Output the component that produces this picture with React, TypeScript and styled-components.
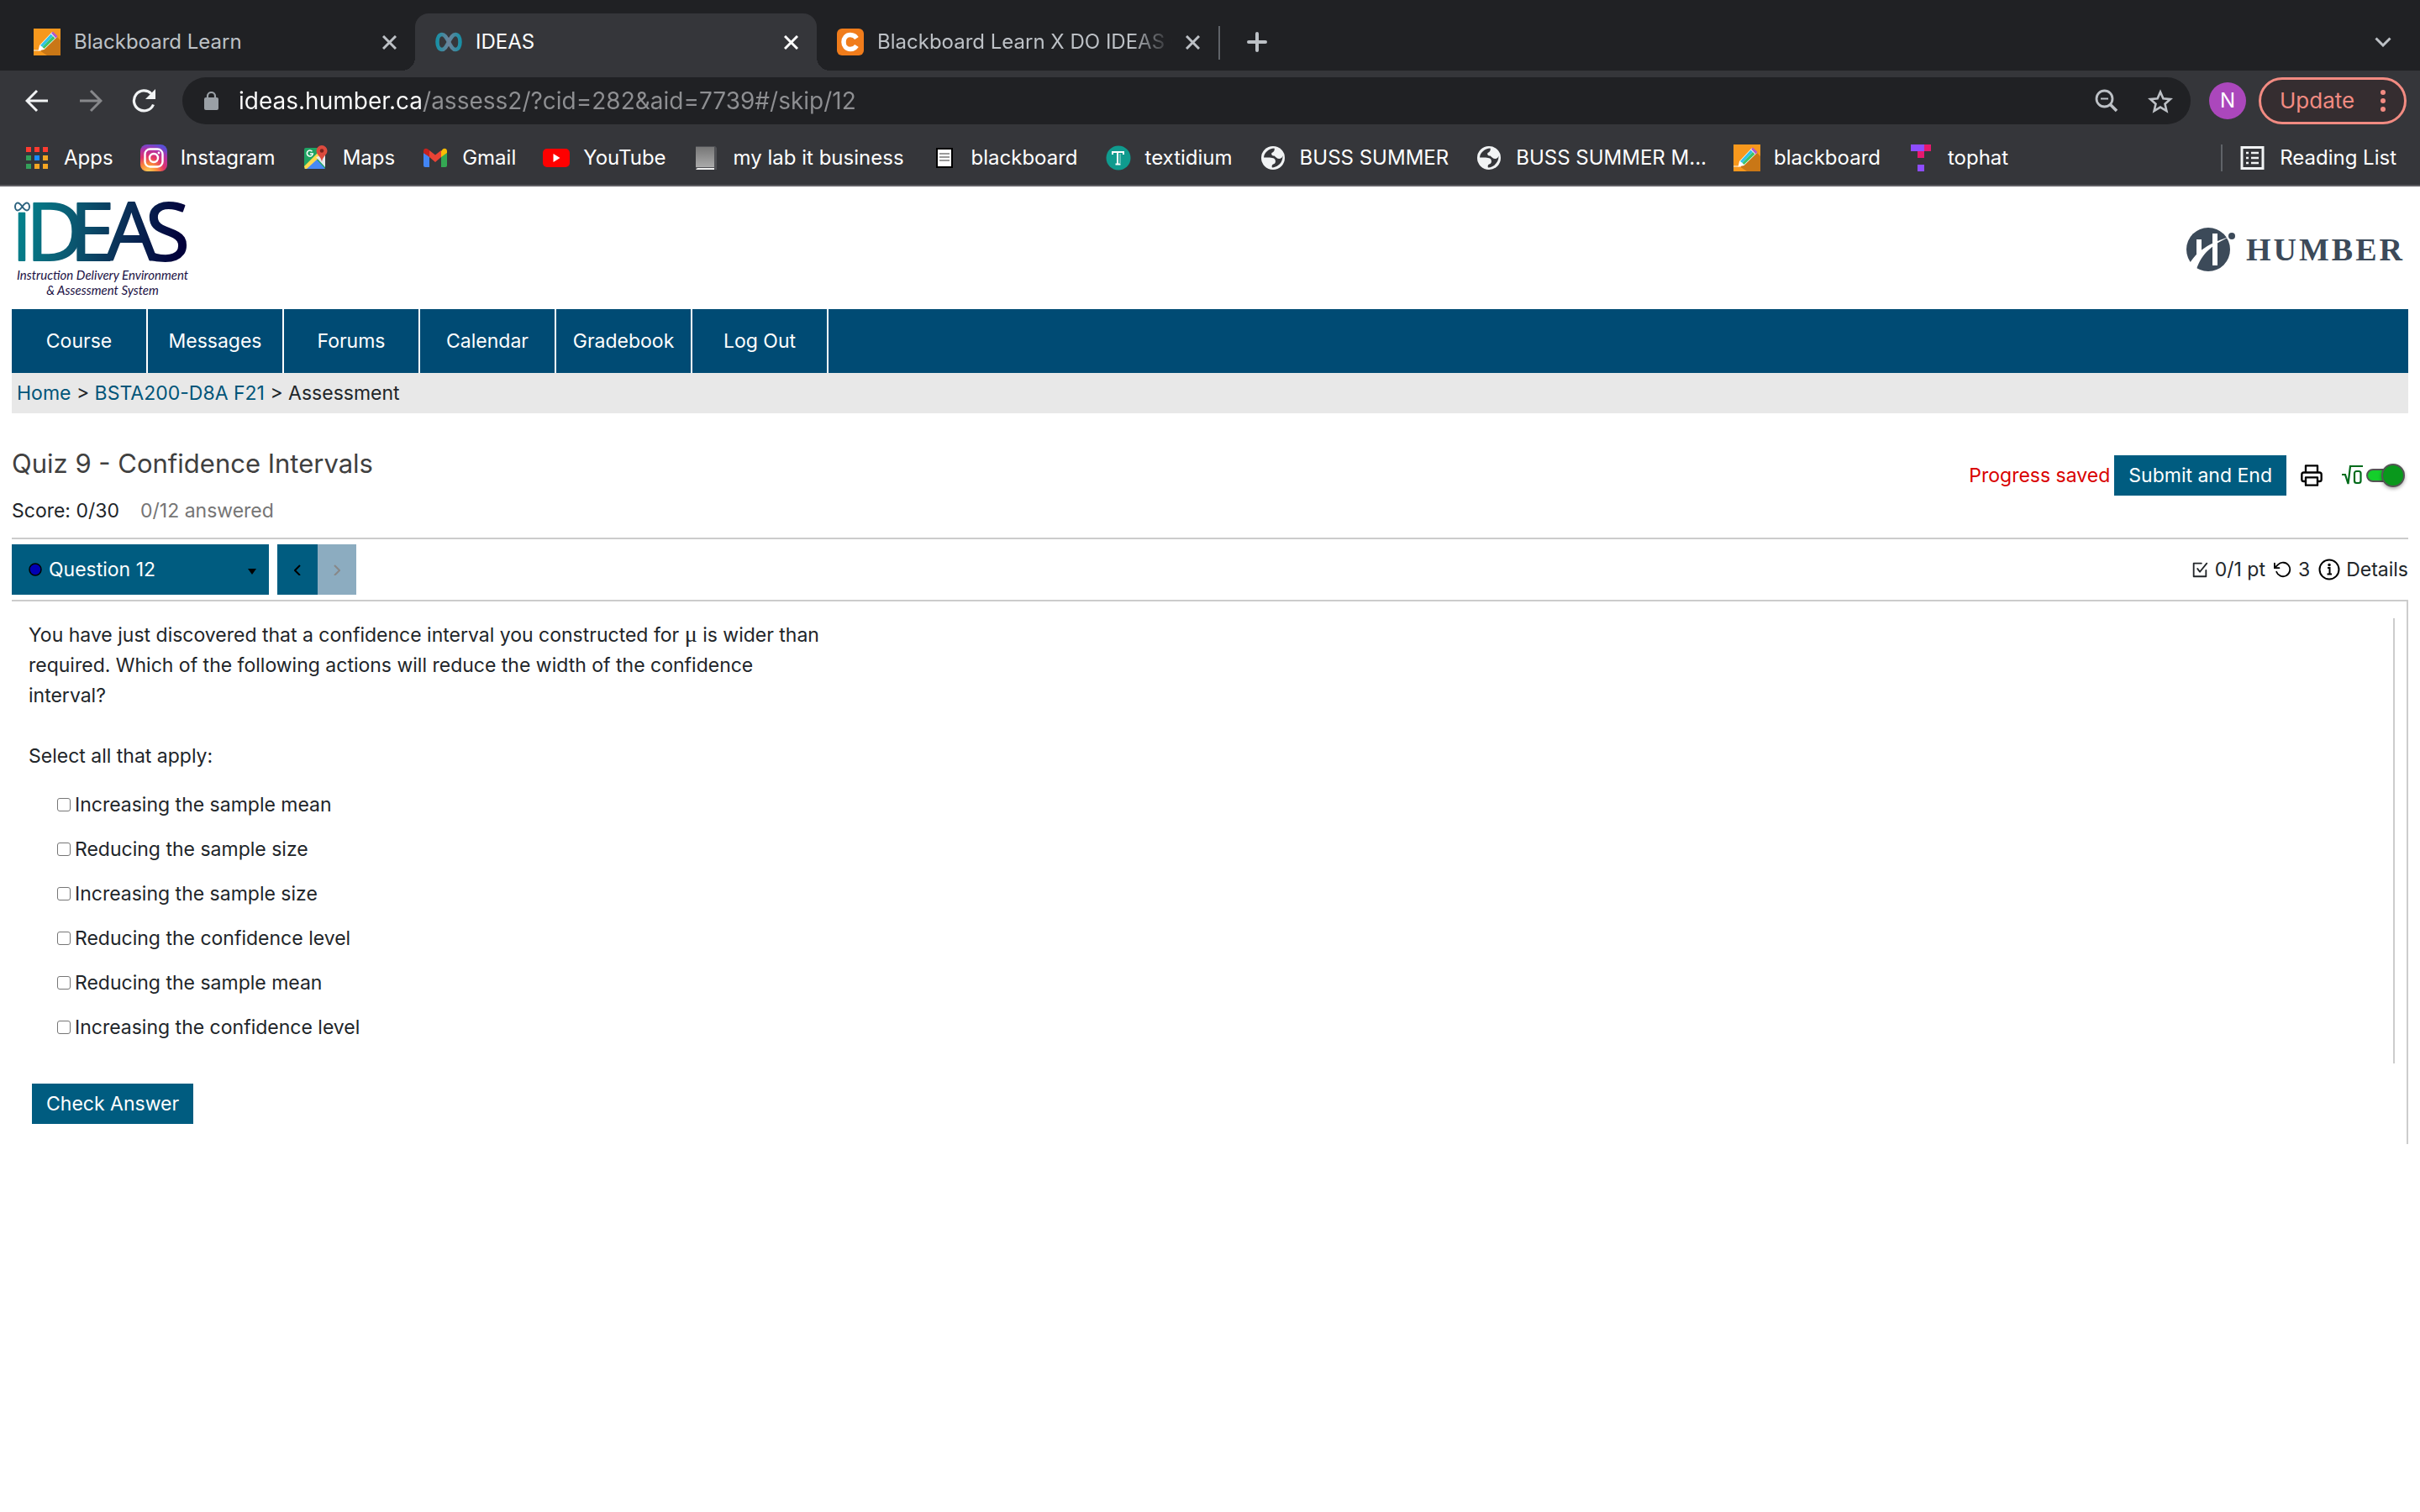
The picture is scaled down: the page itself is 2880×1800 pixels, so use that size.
import React from "react";
import styled, { createGlobalStyle } from "styled-components";

const GlobalStyle = createGlobalStyle`
  *, *::before, *::after { box-sizing: border-box; }
  body {
    margin: 0;
    background: #fff;
    color: #212529;
    font-family: Inter, "Liberation Sans", sans-serif;
    font-size: 23px;
    line-height: 36px;
  }
  button, input, select { font: inherit; color: inherit; }
  button { border: 0; padding: 0; background: none; cursor: pointer; }
  a { color: inherit; text-decoration: none; }
  svg { display: block; flex: none; }
  h1, p, ul { margin: 0; padding: 0; }
`;

/* ---------- Browser chrome ---------- */

const Chrome = styled.header`
  background: #35363a;
  color: #fff;
  font-size: 24px;
  border-bottom: 2px solid #5f5e63;
`;

const TabStrip = styled.div`
  display: flex;
  align-items: flex-end;
  height: 84px;
  padding: 0 34px 0 16px;
  background: #202124;
`;

const Tab = styled.div<{ $active?: boolean }>`
  position: relative;
  display: flex;
  align-items: center;
  gap: 16px;
  flex: 0 1 478px;
  min-width: 0;
  height: 68px;
  padding: 0 22px 0 24px;
  border-radius: 16px 16px 0 0;
  background: ${(p) => (p.$active ? "#35363a" : "transparent")};
  color: ${(p) => (p.$active ? "#fff" : "#bdc1c6")};

  &::before,
  &::after {
    content: ${(p) => (p.$active ? '""' : "none")};
    position: absolute;
    bottom: 0;
    width: 16px;
    height: 16px;
  }
  &::before {
    left: -16px;
    background: radial-gradient(circle at 0 0, transparent 16px, #35363a 16px);
  }
  &::after {
    right: -16px;
    background: radial-gradient(circle at 100% 0, transparent 16px, #35363a 16px);
  }
`;

const TabTitle = styled.span<{ $fade?: boolean }>`
  flex: 1;
  min-width: 0;
  overflow: hidden;
  white-space: nowrap;
  mask-image: ${(p) => (p.$fade ? "linear-gradient(90deg, #000 86%, transparent)" : "none")};
`;

const StripDivider = styled.span`
  width: 2px;
  height: 40px;
  margin-bottom: 13px;
  background: #5f6368;
`;

const StripButton = styled.button<{ $end?: boolean }>`
  display: grid;
  place-items: center;
  height: 68px;
  margin-left: ${(p) => (p.$end ? "auto" : "32px")};
  color: #bdc1c6;
`;

const Toolbar = styled.div`
  display: flex;
  align-items: center;
  height: 72px;
  padding: 0 16px 0 28px;
`;

const NavButton = styled.button<{ $dim?: boolean }>`
  display: grid;
  place-items: center;
  width: 32px;
  height: 48px;
  margin-right: 32px;
  color: ${(p) => (p.$dim ? "#87888b" : "#f1f3f4")};
`;

const AddressBar = styled.div`
  display: flex;
  align-items: center;
  flex: 1;
  height: 56px;
  margin: 0 22px 0 -3px;
  padding: 0 20px 0 26px;
  border-radius: 28px;
  background: #202124;
`;

const AddressInput = styled.input`
  flex: 1;
  min-width: 0;
  height: 40px;
  margin-left: 24px;
  padding: 0;
  border: 0;
  outline: 0;
  font-size: 28px;
  color: #fff;
  background: linear-gradient(90deg, #fff 220px, #8e8f92 220px);
  background-clip: text;
  -webkit-background-clip: text;
  -webkit-text-fill-color: transparent;
`;

const AddressAction = styled.button`
  display: grid;
  place-items: center;
  width: 32px;
  height: 40px;
  margin-left: 32px;
  color: #bdc1c6;
`;

const Avatar = styled.button`
  width: 44px;
  height: 44px;
  margin-right: 15px;
  border-radius: 50%;
  background: #ab47bc;
  text-align: center;
`;

const UpdateButton = styled.button`
  display: flex;
  align-items: center;
  justify-content: space-between;
  width: 176px;
  height: 56px;
  padding: 0 22px;
  border: 3px solid #f28b82;
  border-radius: 28px;
  background: #352d30;
  color: #f28b82;
  font-size: 26px;
`;

const BookmarkBar = styled.nav`
  display: flex;
  align-items: center;
  gap: 32px;
  height: 64px;
  padding: 0 28px;
`;

const Bookmark = styled.a`
  display: flex;
  align-items: center;
  gap: 16px;
  white-space: nowrap;
`;

const ReadingList = styled.button`
  display: flex;
  align-items: center;
  gap: 18px;
  height: 32px;
  margin-left: auto;
  padding-left: 20px;
  border-left: 2px solid #5f6368;
`;

/* ---------- Course page ---------- */

const Page = styled.main`
  padding: 0 14px;
`;

const Masthead = styled.div`
  display: flex;
  align-items: center;
  justify-content: space-between;
  height: 146px;

  svg { overflow: visible; }
`;

const MenuBar = styled.nav`
  display: flex;
  height: 76px;
  background: #004b74;
  color: #fff;
`;

const MenuItem = styled.a`
  display: grid;
  place-items: center;
  width: 162px;
  border-right: 2px solid #fff;
`;

const Breadcrumb = styled.nav`
  padding: 6px;
  background: #e8e8e8;
`;

const CrumbLink = styled.a`
  color: #005579;
`;

const QuizHeader = styled.section`
  display: flex;
  align-items: center;
  justify-content: space-between;
  border-bottom: 2px solid #ccc;
`;

const QuizSummary = styled.div`
  padding: 40px 0 14px;
`;

const QuizTitle = styled.h1`
  margin-bottom: 18px;
  font-size: 31px;
  line-height: 40px;
  font-weight: 400;
  color: #404040;
`;

const ScoreLine = styled.p`
  display: flex;
  gap: 25px;
`;

const Answered = styled.span`
  color: #757575;
`;

const QuizActions = styled.div`
  display: flex;
  align-items: center;
`;

const SavedNote = styled.span`
  margin-right: 5px;
  color: #d90000;
`;

const PrimaryButton = styled.button`
  height: 48px;
  padding: 0 17px;
  background: #005c80;
  color: #fff;
`;

const PrintButton = styled.button`
  margin: 0 22px 0 16px;
  color: #000;
`;

const MathToggle = styled.label`
  display: flex;
  align-items: center;
  gap: 4px;
  padding-right: 4px;
`;

const Switch = styled.input`
  appearance: none;
  display: flex;
  align-items: center;
  width: 46px;
  height: 28px;
  margin: 0;

  &::before {
    content: "";
    width: 32px;
    height: 16px;
    border: 2px solid #555;
    border-radius: 8px;
    background: #14cf2b;
  }
  &::after {
    content: "";
    flex: none;
    width: 28px;
    height: 28px;
    margin-left: -14px;
    border: 2px solid #555;
    border-radius: 50%;
    background: #09981c;
    box-shadow: 0 2px 4px #0005;
  }
`;

const QuestionBar = styled.section`
  display: flex;
  align-items: center;
  justify-content: space-between;
  padding: 6px 0;
  border-bottom: 2px solid #ccc;
`;

const QuestionNav = styled.div`
  display: flex;
  height: 60px;
`;

const QuestionPicker = styled.label`
  display: flex;
  align-items: center;
  width: 306px;
  margin-right: 10px;
  padding: 0 15px 0 20px;
  background: #005c80;
  color: #fff;
`;

const QuestionSelect = styled.select`
  appearance: none;
  flex: 1;
  min-width: 0;
  height: 60px;
  padding: 0 0 0 8px;
  border: 0;
  background: transparent;
`;

const StepButton = styled.button`
  display: grid;
  place-items: center;
  width: 48px;
  background: #005c80;
  color: #000;

  &:disabled {
    width: 46px;
    background: #8cacc0;
    color: #888;
  }
`;

const QuestionInfo = styled.div`
  display: flex;
  align-items: center;
  color: #212529;
`;

const InfoItem = styled.span`
  display: flex;
  align-items: center;
  gap: 7px;
  margin-right: 10px;
`;

const DetailsButton = styled.button`
  display: flex;
  align-items: center;
  gap: 7px;
`;

const QuestionPanel = styled.section`
  padding: 20px 14px 24px 0;
  border-right: 2px solid #ccc;
`;

const QuestionBody = styled.div`
  padding: 2px 20px 17px;
  border-right: 2px solid #ccc;
`;

const Prompt = styled.p`
  max-width: 950px;
  margin-bottom: 36px;
`;

const Mu = styled.span`
  font-family: "Liberation Serif", serif;
  font-size: 28px;
  line-height: 1;
`;

const Options = styled.ul`
  margin: 13px 0 0 34px;
  list-style: none;
`;

const Option = styled.li`
  display: flex;
  align-items: center;
  gap: 5px;
  height: 53px;
`;

const Checkbox = styled.input`
  appearance: none;
  width: 16px;
  height: 16px;
  margin: 0;
  border: 1px solid #767676;
  border-radius: 3px;
  background: #fff;

  &:checked { background: #005c80; }
`;

const CheckRow = styled.div`
  padding: 24px 0 0 24px;
`;

/* ---------- Icons ---------- */

const line = {
  fill: "none",
  stroke: "currentColor",
  strokeWidth: 2,
  strokeLinecap: "round" as const,
  strokeLinejoin: "round" as const,
};

const CloseIcon = () => (
  <svg width="17" height="17" viewBox="0 0 17 17" fill="none" stroke="currentColor" strokeWidth="3">
    <path d="M1 1l15 15M16 1L1 16" />
  </svg>
);

const PencilFavicon = () => (
  <svg width="32" height="32" viewBox="0 0 32 32">
    <rect width="32" height="32" fill="#f7981d" />
    <path d="M27 9L32 14V32H16L7 26z" fill="#c97716" />
    <path d="M0 26h9" stroke="#fbd7a5" strokeWidth="1.5" />
    <path d="M5.500 26.500l1.500-6.500L22 4l6 6L12.500 25z" fill="#fff" />
    <path d="M8 20L20.500 6.500l2.500 2.500-12.500 13z" fill="#2fc3e8" />
    <path d="M10.500 22L23 9l2.500 2.500L12.500 24z" fill="#3bc46a" />
    <path d="M21 5.500l2-2 5.500 5.500-2 2.500z" fill="#b05acb" />
  </svg>
);

const InfinityFavicon = () => (
  <svg width="32" height="32" viewBox="0 0 32 32" fill="none" strokeWidth="4.5">
    <defs>
      <linearGradient id="inf">
        <stop offset="0" stopColor="#1a8fa5" />
        <stop offset=".5" stopColor="#6d8299" />
        <stop offset="1" stopColor="#1a8fa5" />
      </linearGradient>
    </defs>
    <path
      stroke="url(#inf)"
      d="M16 16C13 10 11 7 8 7 4.500 7 2.500 11 2.500 16S4.500 25 8 25c3 0 5-3 8-9s5-9 8-9c3.500 0 5.500 4 5.500 9S27.500 25 24 25c-3 0-5-3-8-9z"
    />
  </svg>
);

const CheggFavicon = () => (
  <svg width="32" height="32" viewBox="0 0 32 32">
    <rect width="32" height="32" rx="6" fill="#f07c1b" />
    <path
      d="M23.500 11.500C21.500 8.500 19 7.500 16 7.500c-5 0-8 3.800-8 8.500s3 8.500 8 8.500c3 0 5.500-1 7.500-4"
      fill="none"
      stroke="#fff"
      strokeWidth="5.500"
    />
  </svg>
);

const PlusIcon = () => (
  <svg width="24" height="24" viewBox="0 0 24 24" stroke="currentColor" strokeWidth="4" strokeLinecap="round">
    <path d="M12 2v20M2 12h20" />
  </svg>
);

const ChevronDown = () => (
  <svg width="20" height="12" viewBox="0 0 20 12" fill="none" stroke="currentColor" strokeWidth="3">
    <path d="M1.500 1.500l8.500 8.500 8.500-8.500" />
  </svg>
);

const ArrowIcon = ({ flip }: { flip?: boolean }) => (
  <svg width="28" height="28" viewBox="0 0 28 28" fill="none" stroke="currentColor" strokeWidth="3">
    {flip ? <path d="M1 14h24M14 2l12 12-12 12" /> : <path d="M27 14H3M14 2L2 14l12 12" />}
  </svg>
);

const ReloadIcon = () => (
  <svg width="30" height="28" viewBox="0 0 30 28">
    <path d="M25.500 18.500A12 12 0 1 1 23 5.500" fill="none" stroke="currentColor" strokeWidth="3.200" />
    <path d="M28 0v12H16z" fill="currentColor" />
  </svg>
);

const LockIcon = () => (
  <svg width="17" height="22" viewBox="0 0 17 22">
    <rect y="7" width="17" height="15" rx="2" fill="#9aa0a6" />
    <path d="M4 8V5.500a4.500 4.500 0 0 1 9 0V8" fill="none" stroke="#9aa0a6" strokeWidth="2.200" />
  </svg>
);

const ZoomIcon = () => (
  <svg width="28" height="28" viewBox="0 0 28 28" fill="none" stroke="currentColor">
    <circle cx="11.500" cy="11.500" r="9.500" strokeWidth="2.800" />
    <path d="M18.500 18.500L26 26" strokeWidth="3.600" />
    <path d="M7 11.500h9" strokeWidth="2" />
  </svg>
);

const StarIcon = () => (
  <svg width="30" height="29" viewBox="0 0 30 29" fill="none" stroke="currentColor" strokeWidth="2.600">
    <path d="M15 3.500l3.400 7.800 8.500.8-6.400 5.600 1.900 8.300L15 21.600 7.600 26l1.900-8.300-6.400-5.600 8.500-.8z" />
  </svg>
);

const DotsIcon = () => (
  <svg width="6" height="28" viewBox="0 0 6 28" fill="currentColor">
    <circle cx="3" cy="4" r="3" />
    <circle cx="3" cy="14" r="3" />
    <circle cx="3" cy="24" r="3" />
  </svg>
);

const gridColours = ["#ff3b30", "#ff3b30", "#ff3b30", "#34a05a", "#1a8cff", "#f5a623", "#34a05a", "#f5a623", "#f5a623"];

const AppsIcon = () => (
  <svg width="32" height="32" viewBox="0 0 32 32">
    {gridColours.map((c, i) => (
      <rect key={i} x={3 + (i % 3) * 10} y={3 + Math.floor(i / 3) * 10} width="6" height="6" fill={c} />
    ))}
  </svg>
);

const InstagramIcon = () => (
  <svg width="32" height="32" viewBox="0 0 32 32">
    <defs>
      <radialGradient id="ig" cx=".3" cy="1.050" r="1.100">
        <stop offset="0" stopColor="#fed45a" />
        <stop offset=".3" stopColor="#fb8a3a" />
        <stop offset=".55" stopColor="#e0336b" />
        <stop offset=".8" stopColor="#b032a8" />
        <stop offset="1" stopColor="#5a50d8" />
      </radialGradient>
    </defs>
    <rect width="32" height="32" rx="8" fill="url(#ig)" />
    <g fill="none" stroke="#fff" strokeWidth="2.400">
      <rect x="5.500" y="5.500" width="21" height="21" rx="6" />
      <circle cx="16" cy="16" r="5" />
    </g>
    <circle cx="22" cy="10" r="1.400" fill="#fff" />
  </svg>
);

const MapsIcon = () => (
  <svg width="32" height="32" viewBox="0 0 32 32">
    <rect x="2" y="4" width="25" height="25" rx="2" fill="#1fa363" />
    <path d="M2 29L15 16l12 13z" fill="#4889f4" />
    <path d="M2 26L24 4l4 4L5 29H3z" fill="#ffd94f" />
    <path d="M16 15L27 27V12z" fill="#e8eaed" />
    <path d="M11.500 8.300a3.500 3.500 0 1 0 .8 2.700H9" fill="none" stroke="#fff" strokeWidth="1.500" />
    <path d="M23 1a6.500 6.500 0 0 0-6.500 6.500c0 5 5.300 6 6.500 13 1.200-7 6.500-8 6.500-13A6.500 6.500 0 0 0 23 1z" fill="#dd4b3e" />
    <circle cx="23" cy="7.500" r="2.300" fill="#7b231d" />
  </svg>
);

const GmailIcon = () => (
  <svg width="32" height="32" viewBox="0 0 32 32">
    <path d="M2 10v15a2 2 0 0 0 2 2h5V14z" fill="#4285f4" />
    <path d="M30 10v15a2 2 0 0 1-2 2h-5V14z" fill="#34a853" />
    <path d="M23 8v7l7-5V8c0-3-3-4-5-2.500z" fill="#fbbc04" />
    <path d="M9 15V7l7 5.500L23 7v8l-7 6z" fill="#ea4335" />
    <path d="M2 8v2l7 5V7L7 5.500C5 4 2 5 2 8z" fill="#c5221f" />
  </svg>
);

const YouTubeIcon = () => (
  <svg width="32" height="32" viewBox="0 0 32 32">
    <rect y="5" width="32" height="22" rx="5" fill="#f00" />
    <path d="M12.500 11l8 5-8 5z" fill="#fff" />
  </svg>
);

const LabIcon = () => (
  <svg width="32" height="32" viewBox="0 0 32 32">
    <defs>
      <linearGradient id="lab" x2="0" y2="1">
        <stop offset="0" stopColor="#777" />
        <stop offset="1" stopColor="#aaa" />
      </linearGradient>
    </defs>
    <path d="M3 2h23l2 2v26H3z" fill="#505155" />
    <rect x="3" y="3" width="22" height="24" fill="url(#lab)" />
    <path d="M3 30l2-2h20v2z" fill="#eee" />
  </svg>
);

const DocIcon = () => (
  <svg width="32" height="32" viewBox="0 0 32 32">
    <rect x="6" y="4" width="20" height="24" fill="#000" />
    <rect x="8" y="6" width="16" height="20" fill="#fff" />
    <path d="M10 11h12M10 15h12M10 19h12" stroke="#999" strokeWidth="2" />
  </svg>
);

const TextidiumIcon = () => (
  <svg width="32" height="32" viewBox="0 0 32 32">
    <circle cx="16" cy="16" r="14.500" fill="#0f9b8e" />
    <path d="M9 12V9h13v3M15 9v14M12.500 23.500h6" fill="none" stroke="#fff" strokeWidth="2" />
    <path d="M18 11v11" stroke="#8fd6cf" strokeWidth="1.200" />
  </svg>
);

const GlobeIcon = () => (
  <svg width="32" height="32" viewBox="0 0 32 32">
    <circle cx="16" cy="16" r="14" fill="#f1f3f4" />
    <path
      d="M5 15.500C5.500 9.500 11 5 17.500 4.500c1 2-.5 4.500-3 5.500-1 2 .5 3.500 3 3.500 2 1.500 3 3.500 6 3.500 2 0 3.500-1.500 4-3.500C28 21 22 27 15 27.500c-1-2 0-4 2.500-4.500 2-1.500 2-5-.5-6.500-2-1-7-1-12-1z"
      fill="#35363a"
    />
  </svg>
);

const TopHatIcon = () => (
  <svg width="32" height="32" viewBox="0 0 32 32">
    <rect x="4" width="16" height="8" fill="#8e4dff" />
    <rect x="20" width="8" height="8" fill="#e6196e" />
    <rect x="12" y="8" width="8" height="8" fill="#e6196e" />
    <rect x="12" y="24" width="8" height="8" fill="#8e4dff" />
  </svg>
);

const ListIcon = () => (
  <svg width="30" height="28" viewBox="0 0 30 28" stroke="#f1f3f4" fill="none">
    <rect x="3" y="1.500" width="25" height="25" strokeWidth="3" />
    <path d="M8 8h3M8 14h3M8 20h3M14 8h9M14 14h9M14 20h9" strokeWidth="2.400" />
  </svg>
);

const IdeasLogo = () => (
  <svg width="220" height="136" viewBox="0 0 220 136" role="img" aria-label="IDEAS">
    <defs>
      <linearGradient id="ideas" gradientUnits="userSpaceOnUse" x1="8" y1="0" x2="208" y2="40">
        <stop offset="0" stopColor="#04868f" />
        <stop offset=".3" stopColor="#0a6076" />
        <stop offset=".65" stopColor="#0a2f57" />
        <stop offset="1" stopColor="#02003a" />
      </linearGradient>
    </defs>
    <path
      d="M12.500 19C10 15.500 8.500 14.500 7 14.500S4 16.500 4 19s1.500 4.500 3 4.500 3-1 5.500-4.500S16.500 14.500 18 14.500s3 2 3 4.500-1.500 4.500-3 4.500-3-1-5.500-4.500z"
      fill="none"
      stroke="#2e6480"
      strokeWidth="2"
    />
    <g fill="url(#ideas)" stroke="url(#ideas)" strokeLinejoin="round" fontFamily="'Open Sans', sans-serif">
      <text y="83" fontSize="96" strokeWidth="2">
        <tspan x="1" fontSize="79">I</tspan>
        <tspan x="17">D</tspan>
        <tspan x="69">E</tspan>
        <tspan x="112">A</tspan>
        <tspan x="159">S</tspan>
      </text>
    </g>
    <g fill="#1b1145" fontFamily="Lato, sans-serif" fontStyle="italic" fontSize="15" textAnchor="middle">
      <text x="108" y="106">Instruction Delivery Environment</text>
      <text x="108" y="124">&amp; Assessment System</text>
    </g>
  </svg>
);

const HumberLogo = () => (
  <svg width="266" height="60" viewBox="0 2 266 60" role="img" aria-label="Humber">
    <g fill="#3c4a59">
      <circle cx="28" cy="34" r="26" />
      <circle cx="56" cy="18" r="4" />
    </g>
    <path d="M14 22h6v16l-6 6z" fill="#fff" />
    <path d="M33 15h6v38h-6z" fill="#fff" />
    <path d="M4 54C12 39 24 28 53 19 34 28 20 38 14 58z" fill="#fff" />
    <text x="73" y="47" fontFamily="'Liberation Serif', serif" fontWeight="700" fontSize="38" letterSpacing="3" fill="#3c4a59">
      HUMBER
    </text>
  </svg>
);

const PrinterIcon = () => (
  <svg width="28" height="28" viewBox="0 0 24 24" {...line}>
    <path d="M6 9V2h12v7M6 18H4a2 2 0 0 1-2-2v-5a2 2 0 0 1 2-2h16a2 2 0 0 1 2 2v5a2 2 0 0 1-2 2h-2" />
    <path d="M6 14h12v8H6z" />
  </svg>
);

const RootIcon = () => (
  <svg width="25" height="26" viewBox="0 0 25 26" fill="none" stroke="#006b1a" strokeWidth="2.200">
    <path d="M0 12h4l3.500 11L10 2h15" />
    <rect x="15" y="8" width="7.500" height="14" rx="2.500" />
  </svg>
);

const CheckSquareIcon = () => (
  <svg width="22" height="22" viewBox="0 0 24 24" {...line}>
    <path d="M9 11l3 4L21 4M20 13v8H4V4h10" />
  </svg>
);

const RetryIcon = () => (
  <svg width="22" height="22" viewBox="0 0 24 24" {...line} stroke="#000">
    <path d="M1 4v6h6M3.500 15a9 9 0 1 0 2.100-9.400L1 10" />
  </svg>
);

const InfoIcon = () => (
  <svg width="26" height="26" viewBox="0 0 26 26" fill="none" stroke="#000" strokeWidth="2">
    <circle cx="13" cy="13" r="11.500" />
    <path d="M11 11h2.500v7M10.500 18.500h5.500" />
    <circle cx="13" cy="7.500" r=".8" />
  </svg>
);

const StatusDot = () => (
  <svg width="16" height="16" viewBox="0 0 16 16">
    <circle cx="8" cy="8" r="7" fill="#0000b4" stroke="#000" strokeWidth="1.500" />
  </svg>
);

const CaretIcon = () => (
  <svg width="10" height="20" viewBox="0 0 10 20">
    <path d="M0 9h10l-5 7z" fill="#000" />
  </svg>
);

const StepIcon = ({ next }: { next?: boolean }) => (
  <svg width="8" height="14" viewBox="0 0 8 14" fill="none" stroke="currentColor" strokeWidth="2">
    {next ? <path d="M1 2l6 6-6 6" /> : <path d="M7 2L1 8l6 6" />}
  </svg>
);

/* ---------- Data ---------- */

const tabs = [
  { title: "Blackboard Learn", Icon: PencilFavicon },
  { title: "IDEAS", Icon: InfinityFavicon, active: true },
  { title: "Blackboard Learn X DO IDEAS Q", Icon: CheggFavicon, fade: true },
];

const bookmarks = [
  { name: "Apps", Icon: AppsIcon },
  { name: "Instagram", Icon: InstagramIcon },
  { name: "Maps", Icon: MapsIcon },
  { name: "Gmail", Icon: GmailIcon },
  { name: "YouTube", Icon: YouTubeIcon },
  { name: "my lab it business", Icon: LabIcon },
  { name: "blackboard", Icon: DocIcon },
  { name: "textidium", Icon: TextidiumIcon },
  { name: "BUSS SUMMER", Icon: GlobeIcon },
  { name: "BUSS SUMMER M...", Icon: GlobeIcon },
  { name: "blackboard", Icon: PencilFavicon },
  { name: "tophat", Icon: TopHatIcon },
];

const menu = ["Course", "Messages", "Forums", "Calendar", "Gradebook", "Log Out"];

const options = [
  "Increasing the sample mean",
  "Reducing the sample size",
  "Increasing the sample size",
  "Reducing the confidence level",
  "Reducing the sample mean",
  "Increasing the confidence level",
];

export default function App() {
  return (
    <>
      <GlobalStyle />
      <Chrome>
        <TabStrip>
          {tabs.map(({ title, Icon, active, fade }) => (
            <Tab key={title} $active={active}>
              <Icon />
              <TabTitle $fade={fade}>{title}</TabTitle>
              <button aria-label={`Close ${title}`}>
                <CloseIcon />
              </button>
            </Tab>
          ))}
          <StripDivider />
          <StripButton aria-label="New tab">
            <PlusIcon />
          </StripButton>
          <StripButton $end aria-label="Search tabs">
            <ChevronDown />
          </StripButton>
        </TabStrip>
        <Toolbar>
          <NavButton aria-label="Back">
            <ArrowIcon />
          </NavButton>
          <NavButton $dim aria-label="Forward">
            <ArrowIcon flip />
          </NavButton>
          <NavButton aria-label="Reload">
            <ReloadIcon />
          </NavButton>
          <AddressBar>
            <LockIcon />
            <AddressInput
              aria-label="Address"
              defaultValue="ideas.humber.ca/assess2/?cid=282&aid=7739#/skip/12"
            />
            <AddressAction aria-label="Zoom">
              <ZoomIcon />
            </AddressAction>
            <AddressAction aria-label="Bookmark this page">
              <StarIcon />
            </AddressAction>
          </AddressBar>
          <Avatar>N</Avatar>
          <UpdateButton>
            Update
            <DotsIcon />
          </UpdateButton>
        </Toolbar>
        <BookmarkBar>
          {bookmarks.map(({ name, Icon }, i) => (
            <Bookmark key={i} href="#">
              <Icon />
              {name}
            </Bookmark>
          ))}
          <ReadingList>
            <ListIcon />
            Reading List
          </ReadingList>
        </BookmarkBar>
      </Chrome>

      <Page>
        <Masthead>
          <IdeasLogo />
          <HumberLogo />
        </Masthead>
        <MenuBar>
          {menu.map((item) => (
            <MenuItem key={item} href="#">
              {item}
            </MenuItem>
          ))}
        </MenuBar>
        <Breadcrumb>
          <CrumbLink href="#">Home</CrumbLink> &gt; <CrumbLink href="#">BSTA200-D8A F21</CrumbLink> &gt; Assessment
        </Breadcrumb>

        <QuizHeader>
          <QuizSummary>
            <QuizTitle>Quiz 9 - Confidence Intervals</QuizTitle>
            <ScoreLine>
              <span>Score: 0/30</span>
              <Answered>0/12 answered</Answered>
            </ScoreLine>
          </QuizSummary>
          <QuizActions>
            <SavedNote>Progress saved</SavedNote>
            <PrimaryButton>Submit and End</PrimaryButton>
            <PrintButton aria-label="Print">
              <PrinterIcon />
            </PrintButton>
            <MathToggle>
              <RootIcon />
              <Switch type="checkbox" role="switch" aria-label="Math display" defaultChecked />
            </MathToggle>
          </QuizActions>
        </QuizHeader>

        <QuestionBar>
          <QuestionNav>
            <QuestionPicker>
              <StatusDot />
              <QuestionSelect aria-label="Question">
                <option>Question 12</option>
              </QuestionSelect>
              <CaretIcon />
            </QuestionPicker>
            <StepButton aria-label="Previous question">
              <StepIcon />
            </StepButton>
            <StepButton aria-label="Next question" disabled>
              <StepIcon next />
            </StepButton>
          </QuestionNav>
          <QuestionInfo>
            <InfoItem>
              <CheckSquareIcon />
              0/1 pt
            </InfoItem>
            <InfoItem>
              <RetryIcon />3
            </InfoItem>
            <DetailsButton>
              <InfoIcon />
              Details
            </DetailsButton>
          </QuestionInfo>
        </QuestionBar>

        <QuestionPanel>
          <QuestionBody>
            <Prompt>
              You have just discovered that a confidence interval you constructed for <Mu>μ</Mu> is wider than required.
              Which of the following actions will reduce the width of the confidence interval?
            </Prompt>
            <p>Select all that apply:</p>
            <Options>
              {options.map((text, i) => (
                <Option key={text}>
                  <Checkbox type="checkbox" id={`choice-${i}`} />
                  <label htmlFor={`choice-${i}`}>{text}</label>
                </Option>
              ))}
            </Options>
          </QuestionBody>
          <CheckRow>
            <PrimaryButton>Check Answer</PrimaryButton>
          </CheckRow>
        </QuestionPanel>
      </Page>
    </>
  );
}
